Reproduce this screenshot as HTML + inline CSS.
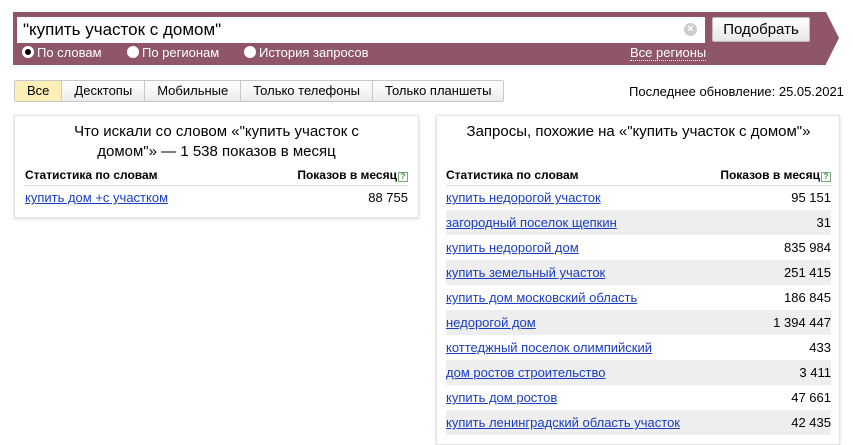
<!DOCTYPE html>
<html><head><meta charset="utf-8"><style>
*{margin:0;padding:0;box-sizing:border-box}
body{width:853px;height:436px;overflow:hidden;background:#fff;font-family:"Liberation Sans",Arial,sans-serif;color:#000;position:relative}
.bar{position:absolute;left:13px;top:12px;width:813px;height:53px;background:#8f5669}
.arrow{position:absolute;left:826px;top:12px;width:0;height:0;border-top:26.5px solid transparent;border-bottom:26.5px solid transparent;border-left:13px solid #8f5669}
.inp{position:absolute;left:17px;top:17px;width:688px;height:26px;background:#fff;font-size:17px;padding:3px 6px;line-height:20px}
.clr{position:absolute;left:684px;top:23px;width:13px;height:13px;border-radius:50%;background:#ccc;color:#fff;font-size:11px;line-height:13px;text-align:center;font-weight:bold}
.btn{position:absolute;left:712px;top:17px;width:98px;height:25px;background:linear-gradient(#fff,#e6e6e6);border:1px solid #bbb;border-radius:2px;font-size:15px;text-align:center;line-height:23px}
.rad{position:absolute;top:45px;font-size:13px;color:#fff;line-height:16px}
.rad i{display:inline-block;width:12px;height:12px;border-radius:50%;background:#fff;vertical-align:-1px;margin-right:3px;position:relative}
.rad i.on::after{content:"";position:absolute;left:3px;top:3px;width:6px;height:6px;border-radius:50%;background:#000}
.reg{position:absolute;left:630px;top:45px;font-size:13px;color:#fff;border-bottom:1px dotted #fff;line-height:15px}
.tabs{position:absolute;left:14px;top:80px;height:22px;display:flex;border:1px solid #c8c8c8;border-radius:2px;font-size:13px}
.tabs div{padding:0 12px;line-height:20px;background:linear-gradient(#fff,#ececec);border-left:1px solid #c8c8c8}
.tabs div:first-child{border-left:0;background:#fbeeb6}
.upd{position:absolute;left:629px;top:84px;font-size:13px}
.panel{position:absolute;background:#fff;border:1px solid #e2e2e2;box-shadow:0 1px 3px rgba(0,0,0,.15)}
.ttl{text-align:center;font-size:15px;line-height:20px}
table{border-collapse:collapse;width:100%;font-size:12px}
th{font-weight:bold;text-align:left;height:20px;border-bottom:1px solid #ddd;font-size:12px;vertical-align:middle}
th.r{text-align:right}
td{height:25px;font-size:13px}
td.r{text-align:right}
a{color:#1a3dc1;text-decoration:underline}
tr.g td{background:#eee}
.q{display:inline-block;width:10px;height:10px;border:1px solid #7a7;color:#393;font-size:8px;line-height:8px;text-align:center;vertical-align:0px;margin-left:1px}
</style></head><body>
<div class="bar"></div><div class="arrow"></div>
<div class="inp">"купить участок с домом"</div>
<div class="clr">×</div>
<div class="btn">Подобрать</div>
<div class="rad" style="left:22px"><i class="on"></i>По словам</div>
<div class="rad" style="left:127px"><i></i>По регионам</div>
<div class="rad" style="left:244px"><i></i>История запросов</div>
<div class="reg">Все регионы</div>
<div class="tabs"><div>Все</div><div>Десктопы</div><div>Мобильные</div><div>Только телефоны</div><div>Только планшеты</div></div>
<div class="upd">Последнее обновление: 25.05.2021</div>

<div class="panel" style="left:14px;top:115px;width:405px;height:103px;padding:6px 10px 0">
<div class="ttl" style="padding:0 40px">Что искали со словом «"купить участок с домом"» — 1 538 показов в месяц</div>
<table style="margin-top:3px"><tr><th>Статистика по словам</th><th class="r">Показов в месяц<span class="q">?</span></th></tr>
<tr><td><a>купить дом +с участком</a></td><td class="r">88 755</td></tr></table>
</div>

<div class="panel" style="left:436px;top:115px;width:404px;height:330px;padding:6px 8px 0 9px">
<div class="ttl" style="margin-top:0">Запросы, похожие на «"купить участок с домом"»</div>
<table style="margin-top:23px"><tr><th>Статистика по словам</th><th class="r">Показов в месяц<span class="q">?</span></th></tr>
<tr><td><a>купить недорогой участок</a></td><td class="r">95 151</td></tr>
<tr class="g"><td><a>загородный поселок щепкин</a></td><td class="r">31</td></tr>
<tr><td><a>купить недорогой дом</a></td><td class="r">835 984</td></tr>
<tr class="g"><td><a>купить земельный участок</a></td><td class="r">251 415</td></tr>
<tr><td><a>купить дом московский область</a></td><td class="r">186 845</td></tr>
<tr class="g"><td><a>недорогой дом</a></td><td class="r">1 394 447</td></tr>
<tr><td><a>коттеджный поселок олимпийский</a></td><td class="r">433</td></tr>
<tr class="g"><td><a>дом ростов строительство</a></td><td class="r">3 411</td></tr>
<tr><td><a>купить дом ростов</a></td><td class="r">47 661</td></tr>
<tr class="g"><td><a>купить ленинградский область участок</a></td><td class="r">42 435</td></tr>
</table>
</div>
</body></html>
